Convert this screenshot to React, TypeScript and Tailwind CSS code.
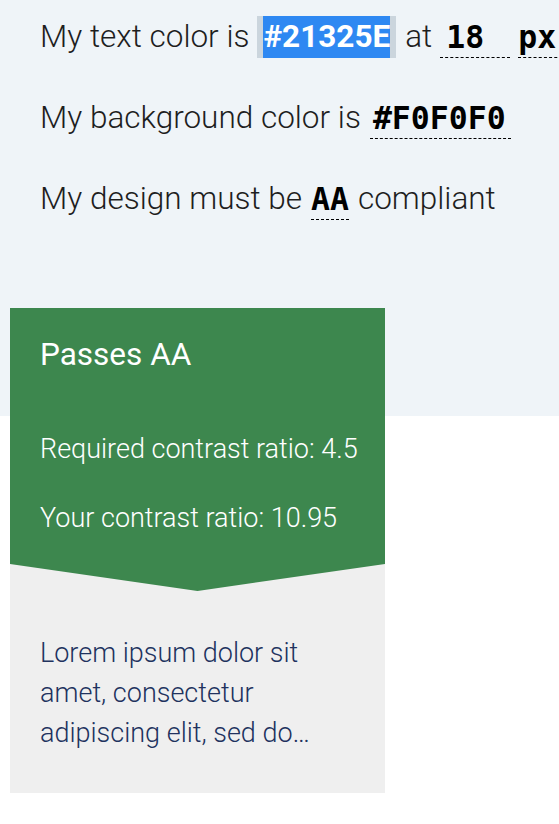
import React from "react";

export default function App() {
  const mono = "shrink-0 font-['DejaVu_Sans_Mono','Liberation_Mono',monospace] font-bold text-black";
  return (
    <div className="w-[559px] min-h-[824px] overflow-hidden bg-[linear-gradient(#eff4f8_416px,#ffffff_416px)] font-['Roboto','Noto_Sans',sans-serif]">
      <div className="flex flex-col gap-[33px] pt-[13px] pl-10 text-[31.5px] leading-[48px] font-light text-[#1e1e1e] whitespace-nowrap">
        <div className="flex items-center">
          <span className="shrink-0">My text color is</span>
          <span className="ml-[8px] inline-flex h-[42px] shrink-0 items-center bg-[#cbd5dd] px-[6px]">
            <span className="bg-[#2e88f2] font-bold text-white leading-[42px]">#21325E</span>
          </span>
          <span className="ml-[9px] shrink-0">at</span>
          <span className={`ml-[8px] inline-block w-[70px] pl-[6px] border-b border-dashed border-black leading-[40px] ${mono}`}>18</span>
          <span className={`ml-[8px] inline-block w-[60px] border-b border-dashed border-black leading-[40px] ${mono}`}>px</span>
        </div>
        <div className="flex items-center">
          <span className="shrink-0">My background color is</span>
          <span className={`ml-[9px] inline-block w-[141px] pl-[3px] border-b border-dashed border-black leading-[40px] ${mono}`}>#F0F0F0</span>
        </div>
        <div className="flex items-center">
          <span className="shrink-0">My design must be</span>
          <span className={`ml-[9px] inline-block border-b border-dashed border-black leading-[40px] ${mono}`}>AA</span>
          <span className="ml-[9px] shrink-0">compliant</span>
        </div>
      </div>

      <div className="ml-[10px] mt-[85px] w-[375px] bg-[#efefef]">
        <div className="bg-[#3d874e] px-[30px] pt-[23px] pb-[53px] text-white [clip-path:polygon(0_0,100%_0,100%_calc(100%-27px),50%_100%,0_calc(100%-27px))]">
          <div className="text-[31.5px] leading-[48px] font-normal">Passes AA</div>
          <div className="mt-[50px] text-[27px] leading-[40px] font-light whitespace-nowrap">Required contrast ratio: 4.5</div>
          <div className="mt-[29px] text-[27px] leading-[40px] font-light whitespace-nowrap">Your contrast ratio: 10.95</div>
        </div>
        <div className="pl-[30px] pr-[60px] pt-[42px] pb-[40px] text-[27px] leading-[40px] font-light text-[#21325e]">
          Lorem ipsum dolor sit amet, consectetur adipiscing elit, sed do…
        </div>
      </div>
    </div>
  );
}
